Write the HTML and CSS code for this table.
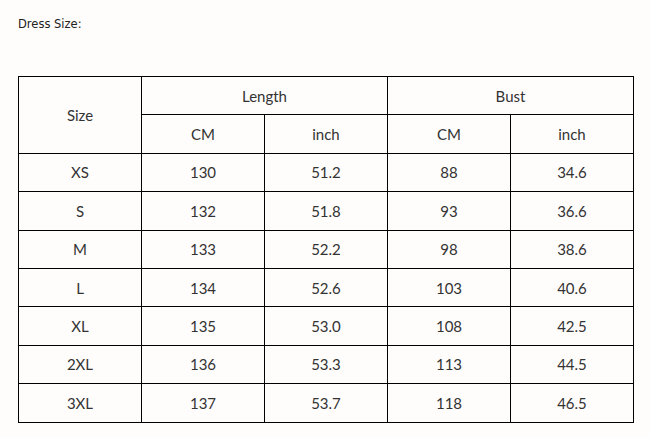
FILE: index.html
```html
<!DOCTYPE html>
<html>
<head>
<meta charset="utf-8">
<link rel="stylesheet" href="styles.css">
</head>
<body>
<div class="page">
  <p class="title">Dress Size:</p>
  <table class="chart">
    <colgroup><col class="c"><col class="c"><col class="c"><col class="c"><col class="c"></colgroup>
    <tr><td rowspan="2">Size</td><td colspan="2">Length</td><td colspan="2">Bust</td></tr>
    <tr><td>CM</td><td>inch</td><td>CM</td><td>inch</td></tr>
    <tr><td>XS</td><td>130</td><td>51.2</td><td>88</td><td>34.6</td></tr>
    <tr><td>S</td><td>132</td><td>51.8</td><td>93</td><td>36.6</td></tr>
    <tr><td>M</td><td>133</td><td>52.2</td><td>98</td><td>38.6</td></tr>
    <tr><td>L</td><td>134</td><td>52.6</td><td>103</td><td>40.6</td></tr>
    <tr><td>XL</td><td>135</td><td>53.0</td><td>108</td><td>42.5</td></tr>
    <tr><td>2XL</td><td>136</td><td>53.3</td><td>113</td><td>44.5</td></tr>
    <tr><td>3XL</td><td>137</td><td>53.7</td><td>118</td><td>46.5</td></tr>
  </table>
</div>
</body>
</html>
```
FILE: styles.css
```css
html, body {
  margin: 0;
  padding: 0;
  background: #fffdfc;
}
.page {
  padding: 16px 0 0 18px;
}
.title {
  margin: 0;
  font-family: "DejaVu Sans", Verdana, sans-serif;
  font-size: 11.5px;
  line-height: 16px;
  color: #222;
}
.chart {
  margin-top: 44px;
  border-collapse: collapse;
  table-layout: fixed;
  width: 616px;
  font-family: Lato, "Open Sans", sans-serif;
  font-size: 15px;
  color: #333;
}
.chart .c {
  width: 123px;
}
.chart td {
  border: 1px solid #000;
  text-align: center;
  vertical-align: middle;
  height: 37.4px;
  padding: 0;
}
```
